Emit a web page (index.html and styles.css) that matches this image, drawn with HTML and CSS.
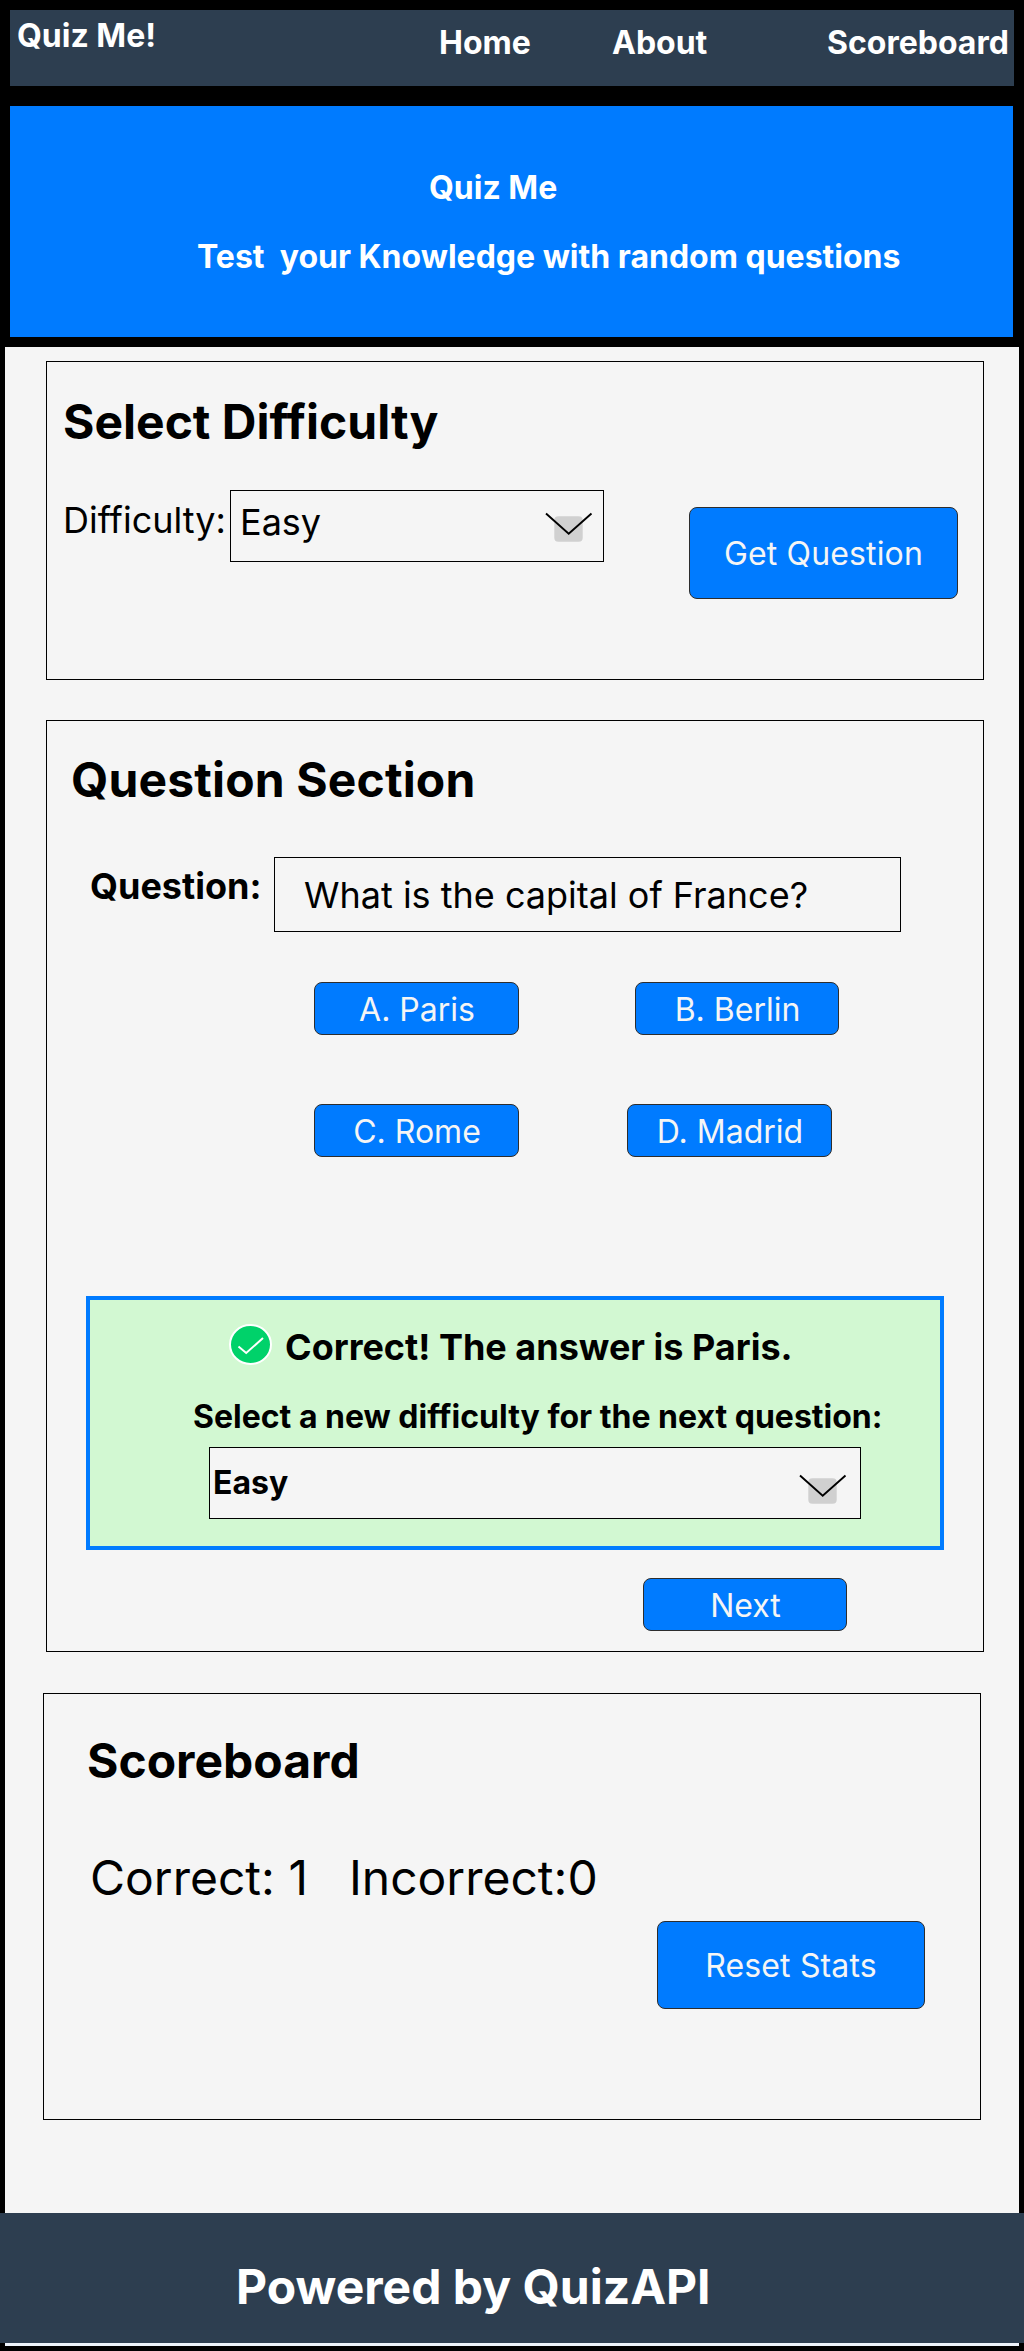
FILE: index.html
```html
<!DOCTYPE html>
<html lang="en">
<head>
<meta charset="utf-8">
<title>Quiz Me!</title>
<link rel="stylesheet" href="styles.css">
</head>
<body>
<div class="page">
  <header class="top">
    <nav class="nav">
      <a class="brand">Quiz Me!</a>
      <a class="link home">Home</a>
      <a class="link about">About</a>
      <a class="link scores">Scoreboard</a>
    </nav>
    <div class="banner">
      <h1 class="banner-title">Quiz Me</h1>
      <p class="banner-text">Test  your Knowledge with random questions</p>
    </div>
  </header>

  <main class="main">
    <section class="card difficulty">
      <h2 class="title">Select Difficulty</h2>
      <div class="difficulty-row">
        <span class="label">Difficulty:</span>
        <div class="select">
          <span class="value">Easy</span>
          <svg class="chevron" width="48" height="32" viewBox="0 0 48 32"><rect x="9.300" y="4.300" width="28.400" height="25.400" rx="4" fill="#d0d0d0"/><path d="M1 1.500 23.700 21.800 46.500 1.500" fill="none" stroke="#000" stroke-width="1.900"/></svg>
        </div>
        <button class="btn btn-large">Get Question</button>
      </div>
    </section>

    <section class="card question">
      <h2 class="title">Question Section</h2>
      <div class="question-row">
        <span class="label">Question:</span>
        <div class="prompt">What is the capital of France?</div>
      </div>
      <div class="answers">
        <button class="btn">A. Paris</button>
        <button class="btn btn-narrow">B. Berlin</button>
      </div>
      <div class="answers answers-last">
        <button class="btn">C. Rome</button>
        <button class="btn">D. Madrid</button>
      </div>
      <div class="feedback">
        <div class="result">
          <svg class="check" width="43" height="41" viewBox="0 0 43 41"><ellipse cx="21.500" cy="20.500" rx="20.500" ry="19.500" fill="#00d26a" stroke="#fff" stroke-width="2"/><path d="M9.500 22.500 17.200 29 34 14" fill="none" stroke="#fff" stroke-width="2"/></svg>
          <span>Correct! The answer is Paris.</span>
        </div>
        <p class="again">Select a new difficulty for the next question:</p>
        <div class="select">
          <span class="value">Easy</span>
          <svg class="chevron" width="48" height="32" viewBox="0 0 48 32"><rect x="9.300" y="4.300" width="28.400" height="25.400" rx="4" fill="#d0d0d0"/><path d="M1 1.500 23.700 21.800 46.500 1.500" fill="none" stroke="#000" stroke-width="1.900"/></svg>
        </div>
      </div>
      <button class="btn btn-narrow next">Next</button>
    </section>

    <section class="card scoreboard">
      <h2 class="title">Scoreboard</h2>
      <div class="stats"><span>Correct: 1</span><span>Incorrect:0</span></div>
      <button class="btn btn-large reset">Reset Stats</button>
    </section>
  </main>

  <footer class="footer">Powered by QuizAPI</footer>
</div>
</body>
</html>
```

FILE: styles.css
```css
* { box-sizing: border-box; }
body {
  margin: 0;
  background: #000;
  font-family: Inter, sans-serif;
  font-size: 32px;
  font-weight: 700;
  line-height: 1;
  color: #000;
  font-variant-ligatures: none;
}
h1, h2, p { margin: 0; font: inherit; line-height: 1; white-space: pre; }
svg { display: block; flex: none; }

.page {
  display: flex;
  flex-direction: column;
  height: 2351px;
  border-bottom: 5px solid #000;
}
.top { padding: 10px; color: #fff; }
.nav {
  display: flex;
  align-items: flex-start;
  height: 76px;
  background: #2d3e50;
  padding-top: 9px;
  margin-bottom: 20px;
}
.nav a { white-space: nowrap; flex: none; }
.brand { width: 429px; padding-left: 7px; padding-top: 1px; }
.link { padding-top: 8px; }
.home { width: 173px; }
.about { width: 215px; }
.banner {
  width: 1003px;
  height: 231px;
  background: #007bff;
  padding-top: 66px;
}
.banner-title { padding-left: 419px; }
.banner-text { padding-left: 187px; margin-top: 37px; }

.main {
  flex: 1;
  margin: 0 5px;
  padding: 14px 0 0 41px;
  background: #f5f5f5;
}
.card {
  width: 938px;
  border: 1px solid #000;
}
.title { font-size: 48px; }
.btn {
  display: block;
  width: 205px;
  height: 53px;
  flex: none;
  padding: 2px 0 0 1px;
  border: 1px solid #2d2d2d;
  border-radius: 8px;
  background: #007bff;
  color: #f5f5f5;
  font: 400 32px/1 Inter, sans-serif;
}
.btn-narrow { width: 204px; }
.select {
  display: flex;
  justify-content: space-between;
  height: 72px;
  border: 1px solid #000;
  background: #f5f5f5;
}

.difficulty { height: 319px; padding: 36px 0 0 16px; }
.difficulty-row {
  display: flex;
  align-items: flex-start;
  margin-top: 44px;
  font-size: 36px;
  font-weight: 400;
}
.difficulty .label { width: 167px; padding-top: 12px; }
.difficulty .select { width: 374px; padding: 13px 10px 0 9px; }
.difficulty .chevron { margin-top: 8px; }
.btn-large {
  width: 269px;
  height: 92px;
  padding: 1px 0 0;
  letter-spacing: 0.15px;
}
.difficulty .btn { margin: 17px 0 0 85px; }

.question { height: 932px; margin-top: 40px; padding: 35px 0 0 24px; }
.question .title { letter-spacing: 0.15px; }
.question-row {
  display: flex;
  align-items: flex-start;
  margin-top: 53px;
  font-size: 36px;
}
.question .label { width: 203px; padding: 11px 0 0 19px; }
.prompt {
  width: 627px;
  height: 75px;
  border: 1px solid #000;
  padding: 19px 0 0 29px;
  font-weight: 400;
}
.answers { display: flex; gap: 116px; margin: 50px 0 0 243px; }
.answers-last { gap: 108px; margin-top: 69px; }
.feedback {
  width: 858px;
  height: 254px;
  margin: 139px 0 0 15px;
  border: 4px solid #007bff;
  background: #d2f8d2;
  padding-top: 24px;
}
.result {
  display: flex;
  gap: 13px;
  padding-left: 139px;
  font-size: 36px;
}
.result span { padding-top: 5px; }
.again { margin: 36px 0 0 103px; }
.feedback .select { width: 652px; margin: 14px 0 0 119px; padding: 19px 13px 0 3px; }
.feedback .chevron { margin-top: 7px; }
.next { margin: 28px 0 0 572px; }

.scoreboard { height: 427px; margin: 41px 0 0 -3px; padding: 43px 0 0 43px; }
.stats {
  display: flex;
  gap: 41px;
  margin: 69px 0 0 3px;
  font-size: 48px;
  font-weight: 400;
}
.reset { width: 268px; height: 88px; margin: 19px 0 0 570px; }

.footer {
  height: 130px;
  background: #2d3e50;
  color: #fff;
  font-size: 48px;
  padding: 50px 0 0 236px;
}
.page::after {
  content: "";
  height: 3px;
  margin: 0 5px;
  background: #edf3fb;
}
```
